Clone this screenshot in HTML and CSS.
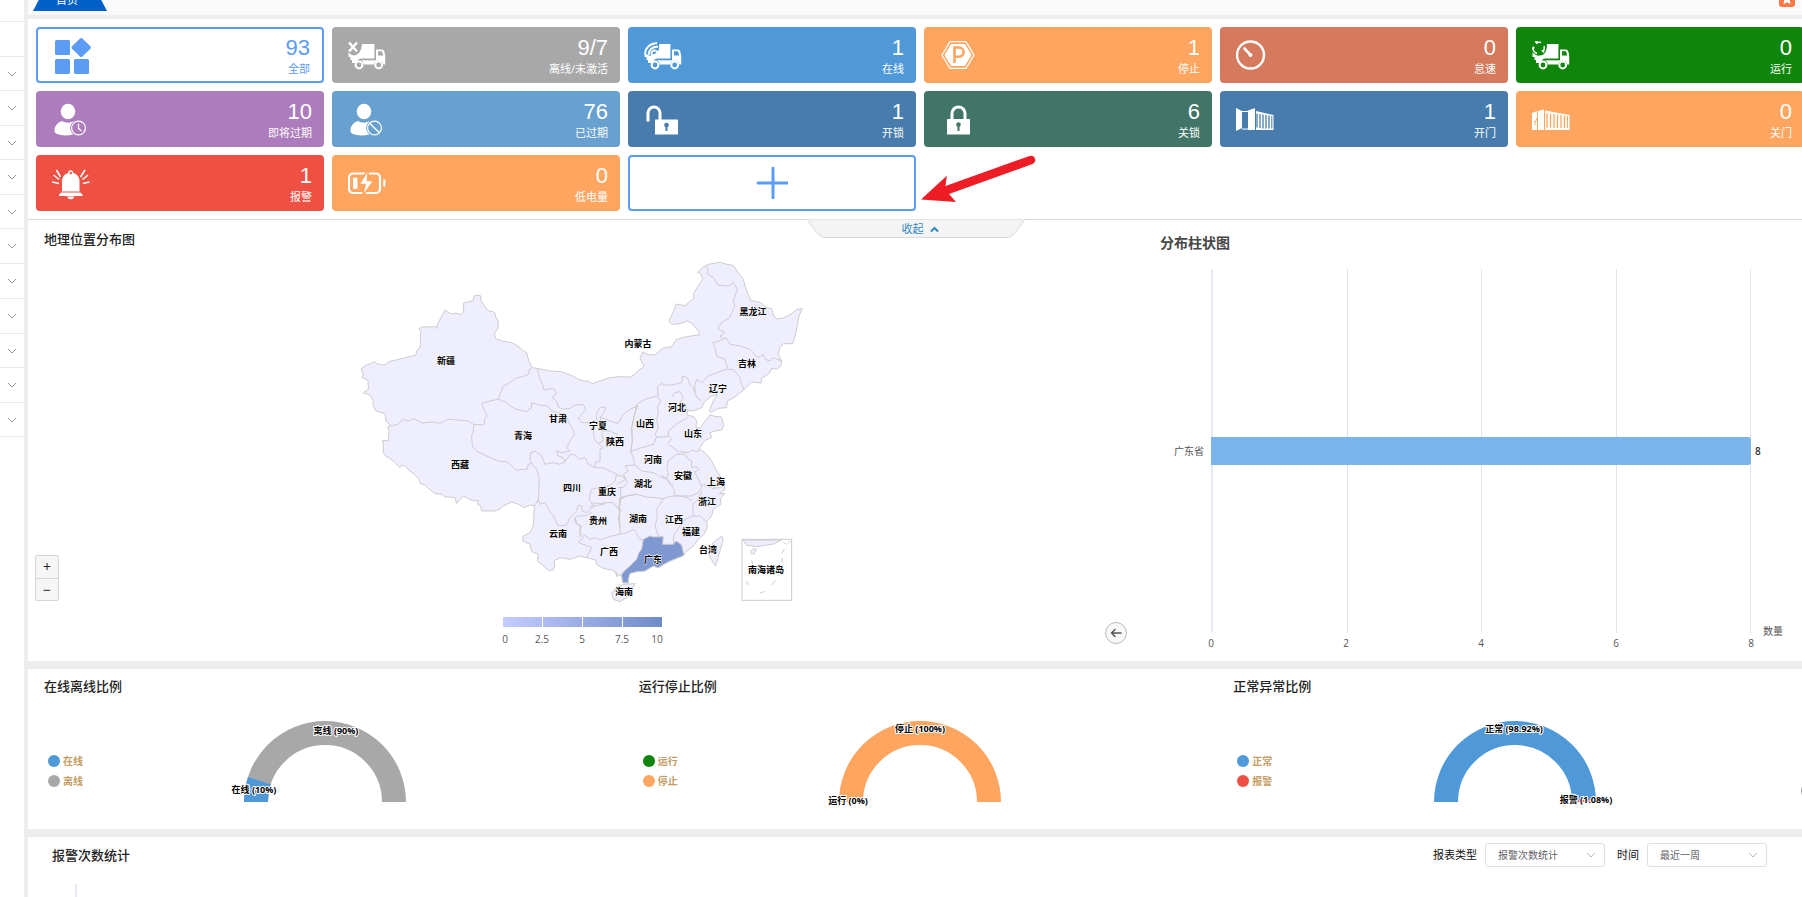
FILE: index.html
```html
<!DOCTYPE html>
<html lang="zh-CN">
<head>
<meta charset="utf-8">
<title>首页</title>
<link rel="stylesheet" href="styles.css">
</head>
<body>
<svg class="sprite" aria-hidden="true">
  <symbol id="chev" viewBox="0 0 10 6"><path d="M1 1l4 4 4-4" fill="none" stroke="currentColor"/></symbol>
  <symbol id="truck" viewBox="0 0 38 38">
    <path fill="currentColor" d="M14 8h12.500v14.500H13q-3 0-4 4.500H4v-3H2.500v-3H.5v-4.500Q6 22 11 17q3-4 3-9z"/>
    <path fill="currentColor" d="M28 13.500h6q2 0 2.500 2.500l.7 4v8.500h-2a4.600 4.600 0 0 0-9 0H15.600a4.600 4.600 0 0 0-4.600-4.200h17z"/>
    <path class="cut" d="M30 15.200h4l1.300 4.300H30z"/>
    <path class="cut-line" d="M27.300 10v13.600H14.500q-2 0-3 1.200"/>
    <circle cx="11" cy="29" r="3.400" fill="none" stroke="currentColor" stroke-width="2"/>
    <circle cx="30.700" cy="29" r="3.400" fill="none" stroke="currentColor" stroke-width="2"/>
  </symbol>
  <symbol id="user" viewBox="0 0 38 38">
    <ellipse cx="16" cy="11.500" rx="7.300" ry="7.700" fill="currentColor"/>
    <path fill="currentColor" d="M10 21q5.500 3.500 12 0-5 4-3.500 9 1 3 3 4.500-10 2-16.500-.5-3-1-2.500-4.500 1-6.500 7.500-8.500z"/>
    <circle cx="26.500" cy="28" r="6.900" fill="none" stroke="currentColor" stroke-width="1.200"/>
  </symbol>
</svg>

<div class="app">
  <nav class="side" aria-label="菜单">
    <button class="side-row" aria-label="菜单 1"></button>
    <button class="side-row" aria-label="菜单 2"><svg><use href="#chev"/></svg></button>
    <button class="side-row" aria-label="菜单 3"><svg><use href="#chev"/></svg></button>
    <button class="side-row" aria-label="菜单 4"><svg><use href="#chev"/></svg></button>
    <button class="side-row" aria-label="菜单 5"><svg><use href="#chev"/></svg></button>
    <button class="side-row" aria-label="菜单 6"><svg><use href="#chev"/></svg></button>
    <button class="side-row" aria-label="菜单 7"><svg><use href="#chev"/></svg></button>
    <button class="side-row" aria-label="菜单 8"><svg><use href="#chev"/></svg></button>
    <button class="side-row" aria-label="菜单 9"><svg><use href="#chev"/></svg></button>
    <button class="side-row" aria-label="菜单 10"><svg><use href="#chev"/></svg></button>
    <button class="side-row" aria-label="菜单 11"><svg><use href="#chev"/></svg></button>
    <button class="side-row" aria-label="菜单 12"><svg><use href="#chev"/></svg></button>
  </nav>

  <main class="main">
    <header class="tabs">
      <a class="tab" href="#">首页</a>
      <button class="badge" aria-label="收藏"><svg viewBox="0 0 16 16"><path fill="#fff" d="M8 2.500l1.700 3.600 3.900.5-2.900 2.700.8 3.900L8 11.300l-3.500 1.900.8-3.900-2.900-2.700 3.900-.5z"/></svg></button>
    </header>

    <section class="cards">
      <button class="card outline">
        <svg class="icon" viewBox="0 0 38 38" fill="currentColor"><rect x="1" y="4" width="15" height="15" rx="1.500"/><rect x="1" y="23" width="15" height="15" rx="1.500"/><rect x="20" y="23" width="15" height="15" rx="1.500"/><path d="M26 2.600q1.200-1.200 2.400 0l8 7.700q1.200 1.200 0 2.400l-8 7.700q-1.200 1.200-2.400 0l-8-7.700q-1.200-1.200 0-2.400z"/></svg>
        <span class="stat"><b>93</b><span>全部</span></span>
      </button>
      <button class="card gray">
        <svg class="icon"><use href="#truck"/><path d="M1 6.500l8 9M9 6.500l-8 9" stroke="#fff" stroke-width="2.400"/></svg>
        <span class="stat"><b>9/7</b><span>离线/未激活</span></span>
      </button>
      <button class="card sky">
        <svg class="icon"><use href="#truck"/><path d="M11 7h4q1 7-2 10-3 4-9 2-2-4 1-8z" fill="#4f99d9"/><g fill="none" stroke="#fff" stroke-width="1.800"><path d="M1 17.500Q2 8 13 7"/><path d="M4.500 19Q5 11 14 10.500"/><path d="M8 19.500a3 3 0 1 1 5.500-3.500q-.5 3-5.500 3.500z"/></g></svg>
        <span class="stat"><b>1</b><span>在线</span></span>
      </button>
      <button class="card orange">
        <svg class="icon" viewBox="0 0 38 38"><path d="M10 5.700h16l8 13.300-8 13.300H10L2 19z" fill="none" stroke="#fff" stroke-width="1.200"/><path d="M11 8h14l6.500 11L25 30H11L4.500 19z" fill="#fff"/><path d="M14.500 27V11.500h4.500a4.500 4.500 0 0 1 0 9.200h-4.500" fill="none" stroke="#fea55f" stroke-width="2.600"/></svg>
        <span class="stat"><b>1</b><span>停止</span></span>
      </button>
      <button class="card clay">
        <svg class="icon" viewBox="0 0 38 38" fill="none" stroke="#fff"><circle cx="14.500" cy="19" r="13.500" stroke-width="2.400"/><path d="M14.500 19L8.500 12.500" stroke-width="2.600" stroke-linecap="round"/><circle cx="14.500" cy="19" r="2" fill="#fff" stroke="none"/></svg>
        <span class="stat"><b>0</b><span>怠速</span></span>
      </button>
      <button class="card green">
        <svg class="icon"><use href="#truck"/><path d="M11 7h4q0 8-3 11-4 3-9 0z" fill="#0f850c"/><g fill="none" stroke="#fff" stroke-width="1.500"><path d="M4 7.500a5.500 5.500 0 0 1 5-1M12 10a6 6 0 0 1-1.500 6M5 17.500a6 6 0 0 1-4-6"/></g><path fill="#fff" d="M2.500 5.500l3.500-.5-1 3.500zM12.500 13.500l-3.500 1 3 2.500zM0 13.500l3-1.500-2-2z"/></svg>
        <span class="stat"><b>0</b><span>运行</span></span>
      </button>

      <button class="card purple">
        <svg class="icon"><use href="#user"/><path d="M26.500 23.500v5l3 2.500" fill="none" stroke="#fff" stroke-width="1.300"/></svg>
        <span class="stat"><b>10</b><span>即将过期</span></span>
      </button>
      <button class="card azure">
        <svg class="icon"><use href="#user"/><path d="M21.700 23.200l9.600 9.600" fill="none" stroke="#fff" stroke-width="1.300"/></svg>
        <span class="stat"><b>76</b><span>已过期</span></span>
      </button>
      <button class="card steel">
        <svg class="icon" viewBox="0 0 38 38"><path d="M4 21.500V13a6 6 0 0 1 12 0v7" fill="none" stroke="#fff" stroke-width="3"/><rect x="11" y="19.500" width="23" height="15" rx=".5" fill="#fff"/><circle cx="22.500" cy="25" r="2.300" fill="#477cac"/><path d="M22.500 25v6" stroke="#477cac" stroke-width="2"/></svg>
        <span class="stat"><b>1</b><span>开锁</span></span>
      </button>
      <button class="card pine">
        <svg class="icon" viewBox="0 0 38 38"><path d="M12 20v-6.500a6.500 6.500 0 0 1 13 0V20" fill="none" stroke="#fff" stroke-width="3"/><rect x="7" y="19" width="23" height="15.500" rx=".5" fill="#fff"/><circle cx="18.500" cy="24.500" r="2.300" fill="#407567"/><path d="M18.500 25v6" stroke="#407567" stroke-width="2"/></svg>
        <span class="stat"><b>6</b><span>关锁</span></span>
      </button>
      <button class="card steel">
        <svg class="icon" viewBox="0 0 38 38"><path fill="#fff" d="M0 8l6 3v17l-6 3zM12 10.500l7-2.500v22h-7zM20 11l17.500 4v15H20z"/><path d="M6 11.500h6M6 29h6" stroke="#fff"/><path stroke="#477cac" stroke-width="1.300" d="M21 13.500v14M24 14v14M27 14.500v14M30 15v13.500M33 15.500v13"/><path stroke="#477cac" d="M35.800 16v12.500"/></svg>
        <span class="stat"><b>1</b><span>开门</span></span>
      </button>
      <button class="card orange">
        <svg class="icon" viewBox="0 0 38 38"><path fill="#fff" d="M0 13l5-2v19H0zM6 11l6-1.500V30H6zM13 10.500L37.500 15v15H13z"/><path d="M3 22q2-2 2-4M4 25q-2-1-1-4" stroke="#fea55f" fill="none"/><path stroke="#fea55f" stroke-width="1.300" d="M15 13v14.500M18.500 13.500v14M22 14v14M25.500 14.500v13.500M29 15v13M32.500 15.500V28"/><path stroke="#fea55f" d="M35.500 16v12"/></svg>
        <span class="stat"><b>0</b><span>关门</span></span>
      </button>

      <button class="card red">
        <svg class="icon" viewBox="0 0 38 38"><path fill="#fff" d="M7 30.500q2-1 3-3.500V18q0-7.500 6-9 .3-2.700 2.700-2.700T21.500 9q6 1.500 6 9v9q1 2.500 3 3.500v1.500H7zM15 32.500h7.500q-1 2.800-3.700 2.800T15 32.500z"/><path d="M9 28h19.500" stroke="#ef5044" stroke-width="1"/><circle cx="18.800" cy="9" r="1.200" fill="#ef5044"/><path stroke="#fff" stroke-width="1.600" d="M8.500 13L4.500 6M7 15.500L1.500 11M7 19.500L0 18M28.500 13l4.500-7M30.500 15.500l5.500-4.500M31 19.500l6.500-1.500"/></svg>
        <span class="stat"><b>1</b><span>报警</span></span>
      </button>
      <button class="card orange">
        <svg class="icon" viewBox="0 0 38 38" fill="none" stroke="#fff"><rect x="1" y="9.500" width="31" height="19.500" rx="4" stroke-width="2.200"/><path d="M36.300 15.500v7" stroke-width="2"/><rect x="5" y="13.500" width="4.500" height="11.500" rx="1" fill="#fff" stroke="none"/><path d="M20.500 5L11 20.500h6L14.500 32.500 26 16.500h-6.500z" fill="#fff" stroke="#fea55f" stroke-width="1.600"/></svg>
        <span class="stat"><b>0</b><span>低电量</span></span>
      </button>
      <div class="add-slot">
        <button class="card outline add" aria-label="添加">
          <svg width="32" height="32" viewBox="0 0 32 32"><path d="M17 1v30M2 16h30" stroke="currentColor" stroke-width="3" stroke-linecap="round"/></svg>
        </button>
        <svg class="arrow" width="122" height="56" viewBox="916 151 122 56"><path fill="#ee1c25" d="M921 199.500L946.800 175.700 945.500 186 1029.500 156a4 4 0 0 1 3 8L949 194 956 202z"/></svg>
      </div>
    </section>

    <section class="maps">
      <button class="fold">
        <svg class="fold-shape" viewBox="0 0 218 20" preserveAspectRatio="none"><path d="M0 .5L11 15q3 3.500 7 3.500h182q4 0 7-3.500L218 .5" fill="#f4f4f4" stroke="#d9d9d9"/></svg>
        <span>收起</span><svg width="9" height="7" viewBox="0 0 9 7"><path d="M1 5.500l3.500-3.500L8 5.500" fill="none" stroke="currentColor" stroke-width="2"/></svg>
      </button>

      <div class="geo">
        <h2 class="title">地理位置分布图</h2>
        <svg class="china" width="460" height="410" viewBox="353 250 460 410" role="img" aria-label="地理位置分布图">
          <g transform="translate(340 250) scale(.3333)" class="land">
            <path d="M64 355L66 350 80 342 88 340 104 332 112 340 118 339 132 343 150 331 185 323 228 312 230 300 242 285 241 260 243 240 237 233 245 228 288 227 293 233 291 222 300 205 315 177 325 184 335 189 348 186 363 191 371 180 371 156 386 152 400 148 402 135 410 132 423 135 422 147 430 160 440 175 450 182 458 181 465 187 467 198 475 210 474 232 463 248 467 263 490 271 515 275 528 282 540 290 548 299 560 305 563 318 568 333 577 350 592 352 630 360 665 362 690 372 700 376 715 385 735 390 745 390 757 398 780 390 810 380 840 377 870 378 885 370 895 358 910 349
            911 345 900 322 908 303 925 311 945 311 970 291 995 287 1008 266 1030 259 1060 254 1078 252 1076 240 1055 217 1042 210 1020 218 995 220 987 210 1002 178 1008 159 1035 164 1062 142 1060 130 1068 115 1088 85 1083 68 1073 64 1090 48 1105 40 1140 34 1160 40 1180 43 1195 65 1210 85 1217 110 1232 148 1260 154 1280 170 1295 173 1302 195 1310 204 1330 201 1355 188 1370 175 1387 173 1377 195 1372 225 1365 255 1358 278 1330 278 1320 290 1315 310 1325 330 1323 345 1310 355 1295 352 1288 367 1265 382 1263 396 1235 393 1212 416 1185 438 1162 450 1160 470 1135 472 1112 485 1108 480 1120 450 1132 430 1110 438 1092 455 1085 470 1060 480 1042 478 1042 492 1063 498 1070 510 1068 528 1080 532 1100 505 1110 492 1125 496 1145 498 1151 525 1145 537 1125 540 1110 545 1115 560 1095 568 1078 592 1100 610 1115 630 1125 650 1140 675 1155 692 1150 700 1130 705 1120 712 1140 710 1153 705 1155 715 1138 728 1155 727 1142 742 1143 760 1120 775 1115 795 1100 812 1102 830 1092 850 1075 865 1060 885 1035 905 1032 913
            1015 920 990 930 968 942 955 950 940 945 915 960 890 962 870 967 865 985 860 996 848 995 845 975 830 970 832 978 826 962 815 957 800 955 785 950 770 940 768 928 740 920 720 915 690 925 660 920 642 930 644 945 640 957 625 958 605 940 592 930 595 910 575 902 570 880 548 870 550 855 570 845 580 825 583 765 570 762 553 770 535 760 515 753 490 765 480 774 465 780 425 780 422 765 413 760 415 748 400 750 385 743 370 735 360 745 350 757 345 740 330 738 315 738 305 730 285 728 265 712 255 702 240 697 237 684 225 672 210 660 195 645 185 642 180 650 165 635 150 622 138 617 130 605 130 580 128 568 145 570 147 540 143 528 152 524 138 510 135 488 108 480 98 460 100 450 90 432 70 425 85 415 84 388 66 380 70 372z"/>
            <path d="M815 1025L830 1010 850 1000 885 998 875 1015 860 1040 840 1052 820 1045zM1145 855L1150 865 1140 900 1127 945 1110 920 1108 900 1120 875z"/>
            <path class="hot" d="M910 865L930 855 940 858 970 857 968 880 1000 880 1005 872 1012 872 1025 882 1032 913 1015 920 990 930 968 942 955 950 940 945 915 960 890 962 870 967 865 985 865 996 848 995 845 970 855 958 870 945 890 925 897 905 905 895z"/>
          </g>
          <g transform="translate(340 250) scale(.3333)" class="line">
            <path d="M152 524L175 520 187 505 205 510 222 503 245 516 280 513 300 517 325 505 350 507 385 510 400 520 425 522 433 520 434 505 442 495 430 470 425 457 450 450 475 445 480 430 490 405 510 395 530 380 550 377 565 370 568 355 577 350"/>
            <path d="M592 352L600 385 608 400 612 417 640 412 650 425 636 440 650 450 655 468 670 475 690 472 705 462 730 460 737 475 725 490 715 500 725 515 750 515 770 510 770 485 782 468 797 470 792 485 780 500 797 505 825 515 835 517 850 490 870 475 893 465"/>
            <path d="M475 445L500 455 515 468 530 475 560 482 575 470 575 455 600 463 620 463 635 480 660 487 680 500 690 520 700 540 703 552 690 570 680 590 690 600 665 605 650 600 655 615 670 620 675 632 660 640 640 635 615 640 605 615 585 600 572 605 570 625 575 637"/>
            <path d="M402 520L400 540 395 555 397 585 410 600 440 615 480 632 500 632 520 650 530 658 550 655 562 655 565 640 575 637 590 655 597 680 597 720 595 745 583 765M595 745L600 760 615 755 625 775 640 795 655 825 680 822 690 800 710 780 715 763 725 765 727 780 740 785 755 770 765 765"/>
            <path d="M675 632L690 610 705 612 720 625 735 620 745 640 765 650 765 635 780 630 780 595 790 590 770 575 762 560 760 535 755 520M780 500L782 520 785 540 810 540 835 553M785 545L790 570 775 578M765 650L785 650 810 660 830 670 825 690 815 700 790 712 775 710 755 715 750 730 748 745 760 765 790 760 800 755 820 755 835 775 840 740 860 735 890 730"/>
            <path d="M830 670L855 680 862 695 850 710 835 710M842 775L835 800 840 830M755 785L735 795 715 795 705 800 712 820 725 825 720 840 720 860M893 465L885 485 875 530 877 570 872 602"/>
          </g>
          <g transform="translate(480 400) scale(.3333)" class="line">
            <path d="M420 295L440 285 470 280 500 288 525 290 550 293 540 310 530 325 532 350 525 375 535 405M422 260L422 295 418 330 420 370 420 400 440 395 460 385 470 395 475 410 490 420M310 400L330 415 345 410 360 417 395 405 420 400"/>
            <path d="M285 350L285 365 300 375 300 395 310 410 295 425 315 432 335 440 325 460 320 470M332 320L340 305 360 308 378 305"/>
            <path d="M580 425L582 400 600 375 615 355 640 345 660 345 680 362M640 345L638 310 650 300 660 285 665 270M550 293L575 285 600 285 620 290 638 300"/>
            <path d="M408 512L410 525"/>
          </g>
          <g transform="translate(600 240) scale(.3333)" class="line">
            <path d="M200 680L205 660 230 640 255 640 265 655 275 660 275 680 290 678 297 686 283 692 290 705 300 725 305 740 295 755 275 765 225 765 222 745 210 730 200 715 205 695 200 680M305 730L325 735 340 745"/>
            <path d="M205 610L220 620 235 632 265 635 275 628 295 632 298 622M262 530L235 545 205 570 205 585 215 595 200 608M92 632L125 620 160 610 170 588 195 588 205 585"/>
            <path d="M110 490L105 515 95 560 97 600 92 632 100 650 105 672 75 675 85 690 70 700 78 715 50 730M110 490L135 475 170 465 182 480 172 500 175 515 170 540 175 560 165 580 170 588"/>
            <path d="M175 465L172 440 185 425 190 432 215 432 245 425 248 405 262 410 270 430 280 440 285 455 290 470 305 480M215 470L225 455 240 452 250 470 240 485 255 490 262 508"/>
            <path d="M285 455L285 430 290 415 305 425 325 405 350 395 378 385 400 385 420 410 425 430 432 446M383 383L375 355 350 345 345 320 338 305 350 303 370 295 378 290 390 310 420 315 450 325 460 335 475 350 490 340 495 355 510 360 520 350 545 360"/>
            <path d="M370 295L360 285 375 275 352 262 370 240 390 230 395 215 405 195 400 180 412 145 400 125 385 135 355 133 340 110 322 98 325 85 318 75M105 672L125 690 160 695 175 705 200 715M183 700L222 735"/>
          </g>
          <g transform="translate(480 400) scale(.3333)" class="inset">
            <rect x="786" y="415" width="149" height="183"/>
            <path class="isle" d="M788 417H905L880 429 830 437 800 433zM812 450l8-7 9 2-7 14-8-1z"/>
            <path d="M909 422l10 8M931 420l-9 10M913 444l-7 13M906 470l1 14M815 478l3 12M800 540l4 12M886 538l-12 15M854 571l-15 6"/>
          </g>
          <g class="names">
            <text x="446" y="363">新疆</text><text x="460" y="467">西藏</text><text x="523" y="438">青海</text><text x="558" y="421">甘肃</text><text x="598" y="428">宁夏</text><text x="615" y="444">陕西</text><text x="572" y="490">四川</text><text x="607" y="494">重庆</text><text x="598" y="523">贵州</text><text x="558" y="536">云南</text><text x="609" y="554">广西</text><text x="653" y="562">广东</text><text x="624" y="594">海南</text><text x="638" y="521">湖南</text><text x="643" y="486">湖北</text><text x="674" y="522">江西</text><text x="691" y="534">福建</text><text x="707" y="504">浙江</text><text x="716" y="484">上海</text><text x="683" y="478">安徽</text><text x="653" y="462">河南</text><text x="693" y="436">山东</text><text x="645" y="426">山西</text><text x="677" y="410">河北</text><text x="718" y="391">辽宁</text><text x="747" y="366">吉林</text><text x="753" y="314">黑龙江</text><text x="638" y="346">内蒙古</text><text x="708" y="552">台湾</text><text x="766" y="572">南海诸岛</text>
          </g>
          <defs><linearGradient id="ramp" gradientUnits="userSpaceOnUse" x1="503" y1="0" x2="662" y2="0"><stop stop-color="#c5ccff"/><stop offset="1" stop-color="#6f8cc8"/></linearGradient></defs>
          <path fill="url(#ramp)" d="M503 616h39v10h-39zM543 616h39v10h-39zM583 616h39v10h-39zM623 616h39v10h-39z"/>
          <g class="scale"><text x="505" y="642">0</text><text x="542" y="642">2.5</text><text x="582" y="642">5</text><text x="622" y="642">7.5</text><text x="657" y="642">10</text></g>
        </svg>
        <div class="zoom"><button aria-label="放大">+</button><button aria-label="缩小">−</button></div>
        <button class="back" aria-label="返回"><svg width="12" height="10" viewBox="0 0 12 10"><path d="M5.500 1L1.500 5l4 4M1.500 5H11.500" fill="none" stroke="#555" stroke-width="1.400"/></svg></button>
      </div>

      <div class="bars">
        <h2 class="title chart-title">分布柱状图</h2>
        <div class="chart">
          <span class="cat">广东省</span>
          <div class="lines"><i></i><i></i><i></i><i></i></div>
          <div class="bar"></div>
          <span class="val">8</span>
          <span class="unit">数量</span>
          <div class="ticks"><span>0</span><span>2</span><span>4</span><span>6</span><span>8</span></div>
        </div>
      </div>
    </section>

    <section class="ratios">
      <div class="ratio">
        <h2 class="title">在线离线比例</h2>
        <div class="ratio-body">
          <div class="legend"><button><i class="sky"></i>在线</button><button><i class="gray"></i>离线</button></div>
          <svg width="220" height="100" viewBox="0 0 220 100"><path d="M110 87m-69 0a69 69 0 0 1 138 0" class="arc" stroke="#a8a8a8"/><path d="M41 87A69 69 0 0 1 44.400 65.700" class="arc" stroke="#4f99d9"/><text x="121" y="19">离线 (90%)</text><text x="39" y="78">在线 (10%)</text></svg>
        </div>
      </div>
      <div class="ratio">
        <h2 class="title">运行停止比例</h2>
        <div class="ratio-body">
          <div class="legend"><button><i class="green"></i>运行</button><button><i class="orange"></i>停止</button></div>
          <svg width="220" height="100" viewBox="0 0 220 100"><path d="M110 87m-69 0a69 69 0 0 1 138 0" class="arc" stroke="#fea55f"/><text x="110" y="17">停止 (100%)</text><text x="38" y="89">运行 (0%)</text></svg>
        </div>
      </div>
      <div class="ratio">
        <h2 class="title">正常异常比例</h2>
        <div class="ratio-body">
          <div class="legend"><button><i class="sky"></i>正常</button><button><i class="red"></i>报警</button></div>
          <svg width="220" height="100" viewBox="0 0 220 100"><path d="M110 87m-69 0a69 69 0 0 1 138 0" class="arc" stroke="#4f99d9"/><path d="M179 87A69 69 0 0 0 178.960 84.700" class="arc" stroke="#ef5044"/><text x="109" y="17">正常 (98.92%)</text><text x="181" y="88">报警 (1.08%)</text></svg>
        </div>
      </div>
      <button class="back next" aria-label="下一页"></button>
    </section>

    <section class="alarm">
      <div class="alarm-head">
        <h2 class="title">报警次数统计</h2>
        <label for="type">报表类型</label>
        <span class="pick"><select id="type"><option>报警次数统计</option></select><svg><use href="#chev"/></svg></span>
        <label for="time">时间</label>
        <span class="pick"><select id="time"><option>最近一周</option></select><svg><use href="#chev"/></svg></span>
      </div>
      <div class="alarm-axis"></div>
    </section>
  </main>
</div>
</body>
</html>
```

FILE: styles.css
```css
* { box-sizing: border-box; }
body {
  margin: 0;
  background: #fff;
  color: #222;
  font: 11px/20px "Open Sans", "Noto Sans CJK SC", sans-serif;
}
button {
  margin: 0;
  padding: 0;
  border: 0;
  background: none;
  color: inherit;
  font: inherit;
  cursor: pointer;
}
svg { display: block; }
.sprite { position: absolute; width: 0; height: 0; }

.app { display: flex; height: 100vh; overflow: hidden; }

.side { width: 24px; flex: none; padding-top: 21px; background: #fff; }
.side-row {
  display: flex;
  align-items: center;
  justify-content: center;
  width: 100%;
  height: 34px;
  border-bottom: 1px solid #e6e8f0;
  color: #999;
}
.side-row:nth-child(odd),
.side-row:nth-child(8) { height: 35px; }
.side-row:first-child { height: 36px; border-top: 1px solid #e6e8f0; }
.side-row svg { width: 10px; height: 6px; }

.main {
  flex: 1;
  min-width: 0;
  border-left: 4px solid #ededed;
  display: flex;
  flex-direction: column;
  overflow: hidden;
}

.tabs {
  display: flex;
  align-items: flex-end;
  justify-content: space-between;
  flex: none;
  height: 19px;
  padding: 0 7px 4px 5px;
  background: #fafafa;
  border-bottom: 4px solid #ededed;
  overflow: hidden;
}
.tab {
  width: 74px;
  height: 23px;
  padding-left: 23px;
  line-height: 24px;
  background: #0060c8;
  color: #fff;
  text-decoration: none;
  clip-path: polygon(12px 0, 62px 0, 100% 100%, 0 100%);
}
.badge { width: 16px; height: 16px; margin-bottom: 4px; border-radius: 3px; background: #ff7744; }

.cards {
  display: grid;
  grid-template-columns: repeat(6, 1fr);
  gap: 8px;
  flex: none;
  margin-right: -2px;
  padding: 8px 0 8px 8px;
}
.card {
  display: flex;
  align-items: center;
  justify-content: space-between;
  width: 100%;
  height: 56px;
  padding: 0 12px 0 16px;
  border-radius: 4px;
  color: #fff;
}
.icon { width: 38px; height: 38px; }
.stat { display: flex; flex-direction: column; align-items: flex-end; padding-top: 2px; line-height: 16px; }
.stat b { font: 22px/26px "Liberation Sans", Arial, sans-serif; }
.outline { border: 2px solid #5d9cf5; background: #fff; color: #5d9cf5; }
.gray { background: #a8a8a8; --bg: #a8a8a8; }
.sky { background: #4f99d9; --bg: #4f99d9; }
.orange { background: #fea55f; }
.clay { background: #d57a5c; }
.green { background: #0f850c; --bg: #0f850c; }
.purple { background: #ad7cbc; }
.azure { background: #68a0d0; }
.steel { background: #477cac; }
.pine { background: #407567; }
.red { background: #ef5044; }
.cut { fill: var(--bg); }
.cut-line { fill: none; stroke: var(--bg); stroke-width: 1; }
.add-slot { position: relative; }
.add { justify-content: center; padding: 0; }
.arrow { position: absolute; left: 100%; top: -4px; }

.maps {
  display: flex;
  flex: none;
  position: relative;
  margin-right: -2px;
  padding-top: 1px;
  border-top: 1px solid #d9d9d9;
}
.fold {
  position: absolute;
  top: -1px;
  left: 50%;
  display: flex;
  align-items: center;
  justify-content: center;
  gap: 6px;
  width: 218px;
  height: 20px;
  margin-left: -109px;
  padding-left: 8px;
  color: #3187c0;
  z-index: 1;
}
.fold-shape { position: absolute; inset: 0; width: 100%; height: 100%; z-index: -1; }

.title { margin: 0; font-size: 13px; line-height: 20px; font-weight: 500; }
.geo { position: relative; flex: 5; min-width: 0; padding-top: 8px; }
.geo .title { padding-left: 16px; }
.china { margin: 2px auto 0; }
.land path { fill: #efeeff; stroke: #ccc; stroke-width: 3; stroke-linejoin: round; }
.land .hot { fill: #8098d2; }
.line path { fill: none; stroke: #ccc; stroke-width: 3; stroke-linejoin: round; }
.inset { fill: none; stroke: #ccc; stroke-width: 3; }
.inset .isle { fill: #efeeff; }
.names text, .ratio text {
  font-size: 9px;
  font-weight: 700;
  text-anchor: middle;
  fill: #000;
  stroke: #fff;
  stroke-width: 2px;
  stroke-linejoin: round;
  paint-order: stroke;
}
.names text { stroke-width: 1px; }
.scale text { font-size: 10px; text-anchor: middle; fill: #555; }

.zoom {
  position: absolute;
  left: 7px;
  bottom: 60px;
  display: flex;
  flex-direction: column;
  width: 24px;
  border: 1px solid #d6d6d6;
  border-radius: 2px;
  background: #f6f6f6;
}
.zoom button { height: 22px; font-size: 14px; line-height: 20px; }
.zoom button + button { border-top: 1px solid #d6d6d6; }
.back {
  position: absolute;
  right: 11px;
  bottom: 17px;
  display: flex;
  align-items: center;
  justify-content: center;
  width: 22px;
  height: 22px;
  border: 1px solid #bbb;
  border-radius: 50%;
  background: #f8f8f8;
}

.bars { flex: 3; min-width: 0; padding: 12px 0 8px; }
.chart-title { padding-left: 22px; font-size: 14px; font-weight: 700; color: #464646; }
.chart {
  display: grid;
  grid-template: 364px 20px / 73px 1fr 53px;
  margin-top: 16px;
  font-size: 10px;
  color: #555;
}
.cat { grid-area: 1 / 1; align-self: center; justify-self: end; padding-right: 7px; }
.lines {
  grid-area: 1 / 2;
  display: flex;
  border-left: 2px solid #e6eaf2;
}
.lines i { flex: 1; border-right: 1px solid #e0e3ec; }
.bar {
  grid-area: 1 / 2;
  align-self: center;
  height: 28px;
  border-radius: 0 3px 3px 0;
  background: #7cb4ec;
}
.val { grid-area: 1 / 3; align-self: center; padding-left: 4px; color: #333; font-weight: 600; }
.unit { grid-area: 1 / 3; align-self: end; margin-bottom: -8px; padding-left: 12px; }
.ticks { grid-area: 2 / 2; display: flex; justify-content: space-between; }
.ticks span { display: flex; justify-content: center; width: 0; }

.ratios {
  position: relative;
  display: grid;
  grid-template-columns: repeat(3, 1fr);
  flex: none;
  margin-right: -10px;
  border: solid #ededed;
  border-width: 8px 0;
}
.ratio { padding: 7px 0 14px; }
.ratio .title { padding-left: 16px; }
.ratio-body { display: grid; grid-template-columns: 1fr auto 1fr; margin-top: 19px; }
.legend {
  display: flex;
  flex-direction: column;
  align-items: flex-start;
  align-self: center;
  margin-top: 12px;
  padding-left: 20px;
}
.legend button {
  display: flex;
  align-items: center;
  gap: 3px;
  height: 20px;
  font-size: 10px;
  font-weight: 600;
  color: #c49c64;
}
.legend i { width: 12px; height: 12px; border-radius: 50%; }
.arc { fill: none; stroke-width: 24; }
.next { right: -11px; bottom: 27px; border-color: #999; }

.alarm { flex: 1; display: flex; flex-direction: column; }
.alarm-head { display: flex; align-items: center; padding: 6px 35px 0 24px; color: #111; }
.alarm-head .title { margin-right: auto; color: #222; }
.alarm-head label { margin: 0 8px 0 12px; }
.pick { position: relative; display: block; width: 120px; }
.pick select {
  width: 100%;
  height: 24px;
  padding: 0 12px;
  border: 1px solid #dcdfe6;
  border-radius: 3px;
  background: #fff;
  color: #606266;
  font: 10px "Open Sans", "Noto Sans CJK SC", sans-serif;
  appearance: none;
}
.pick svg {
  position: absolute;
  right: 9px;
  top: 9px;
  width: 10px;
  height: 6px;
  color: #b8bcc6;
  pointer-events: none;
}
.alarm-axis { flex: 1; margin: 17px 0 0 47px; border-left: 2px solid #e6eaf2; }
```
